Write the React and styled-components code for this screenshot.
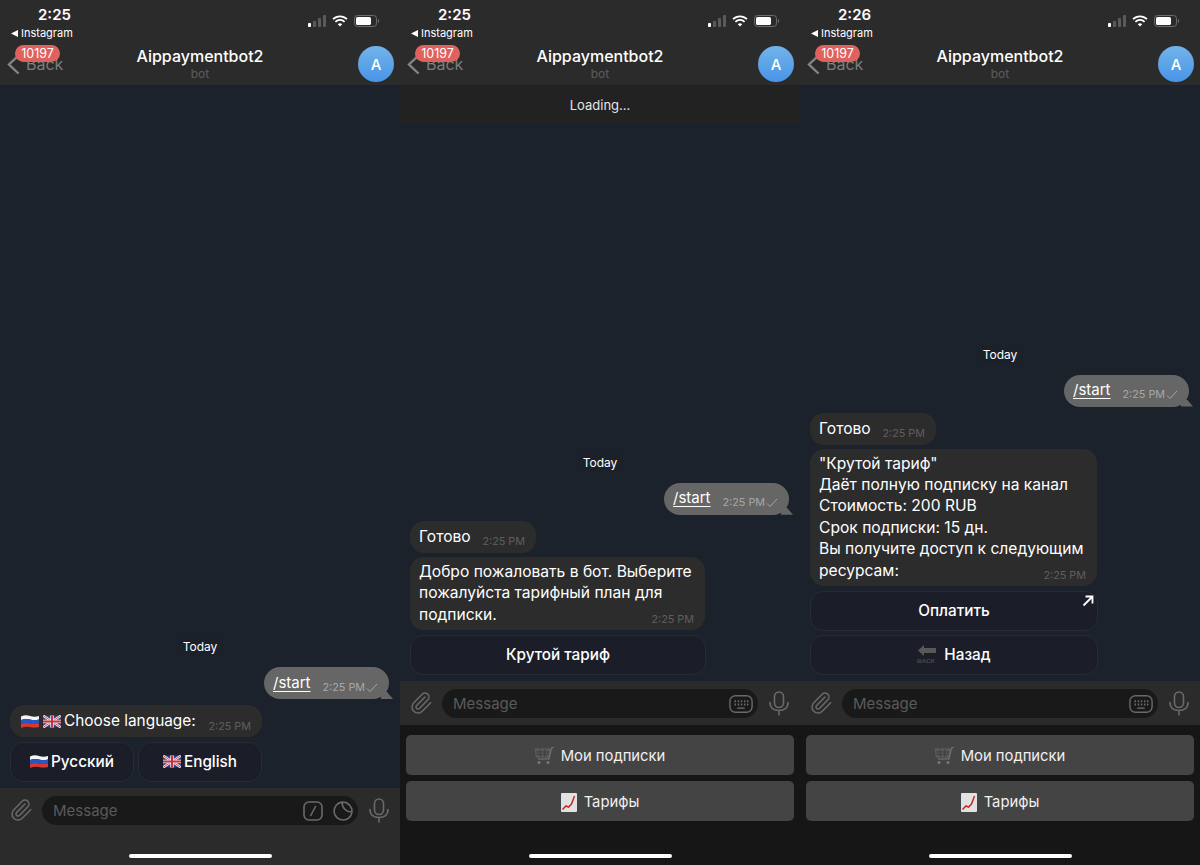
import React from 'react';
import styled, { createGlobalStyle, css } from 'styled-components';
import { Paperclip } from 'lucide-react';

const GlobalStyle = createGlobalStyle`
  html, body { margin: 0; padding: 0; background: #1b222c; }
  body { font-family: Inter, "Liberation Sans", sans-serif; }
`;

const Page = styled.div`
  display: flex;
  width: 1200px;
  height: 865px;
  overflow: hidden;
`;

const Phone = styled.section`
  width: 400px;
  height: 865px;
  display: flex;
  flex-direction: column;
  background: #1b222c;
  color: #fff;
  position: relative;
`;

const Header = styled.header`
  height: 85px;
  flex: none;
  background: #2b2b2b;
  position: relative;
`;

const Clock = styled.div`
  position: absolute;
  left: 38px;
  top: 6px;
  font-size: 15px;
  font-weight: 600;
  line-height: 18px;
`;

const BackApp = styled.div`
  position: absolute;
  left: 11px;
  top: 26px;
  font-size: 11px;
  line-height: 14px;
  display: flex;
  align-items: center;
  gap: 3px;
`;

const StatusIcons = styled.div`
  position: absolute;
  left: 308px;
  top: 15px;
  display: flex;
  align-items: center;
  gap: 6px;
`;

const BackLink = styled.div`
  position: absolute;
  left: 7px;
  top: 53px;
  display: flex;
  align-items: center;
  gap: 6px;
  color: #7d7d7d;
  font-size: 16px;
  line-height: 22px;
`;

const Badge = styled.div`
  position: absolute;
  left: 15px;
  top: 45px;
  height: 17px;
  width: 45px;
  border-radius: 9px;
  background: #e0615e;
  color: #fff;
  font-size: 12.5px;
  line-height: 17px;
  text-align: center;
`;

const Title = styled.div`
  position: absolute;
  left: 0;
  right: 0;
  top: 46px;
  text-align: center;
  font-size: 16px;
  font-weight: 500;
  line-height: 20px;
`;

const Subtitle = styled.div`
  position: absolute;
  left: 0;
  right: 0;
  top: 66px;
  text-align: center;
  font-size: 12px;
  line-height: 15px;
  color: #5c5c5c;
`;

const Avatar = styled.div`
  position: absolute;
  left: 358px;
  top: 46px;
  width: 36px;
  height: 36px;
  border-radius: 50%;
  background: linear-gradient(#72b4ea, #4a93e6);
  display: flex;
  align-items: center;
  justify-content: center;
  font-size: 15px;
  font-weight: 500;
`;

const Loading = styled.div`
  height: 39px;
  flex: none;
  background: #222;
  display: flex;
  align-items: center;
  justify-content: center;
  font-size: 13px;
  color: #e4e4e4;
`;

const Chat = styled.div`
  flex: 1;
  min-height: 0;
  display: flex;
  flex-direction: column;
  justify-content: flex-end;
  padding: 0 10px 6px;
`;

const DateChip = styled.div`
  align-self: center;
  background: #1c2129;
  border-radius: 10px;
  padding: 0 6px;
  height: 18px;
  line-height: 18px;
  font-size: 12px;
  margin-bottom: 11px;
`;

const Outgoing = styled.div`
  align-self: flex-end;
  position: relative;
  height: 32px;
  width: 125px;
  box-sizing: border-box;
  margin-right: 1px;
  margin-bottom: 6px;
  border-radius: 16px;
  background: #666;
  padding-left: 9px;
  display: flex;
  align-items: center;
  gap: 12px;
  font-size: 15px;

  &::after {
    content: '';
    position: absolute;
    right: -4px;
    bottom: 0;
    width: 12px;
    height: 7px;
    background: #666;
    clip-path: polygon(0 0, 50% 0, 100% 100%, 0 100%);
  }
`;

const Command = styled.span`
  text-decoration: underline;
  text-underline-offset: 3px;
  margin-bottom: 2px;
`;

const Time = styled.span`
  font-size: 10.8px;
  color: ${p => p.$light ? '#a6a6a6' : '#5f5f5f'};
  line-height: 12px;
  white-space: nowrap;
`;

const OutTime = styled.span`
  display: flex;
  align-items: center;
  gap: 1px;
  margin-top: 9px;
  position: relative;
  z-index: 1;
`;

const Incoming = styled.div`
  align-self: flex-start;
  box-sizing: border-box;
  width: ${p => p.$width}px;
  border-radius: 14px;
  background: #2c2c2c;
  font-size: 15.6px;
  line-height: 21.4px;
  position: relative;
  margin-bottom: ${p => p.$gap ?? 4}px;
  ${p => p.$single ? css`
    height: 32px;
    padding: 0 9px;
    display: flex;
    align-items: center;
  ` : css`
    padding: 4px 9px 5px;
  `}
`;

const TimeSlot = styled.span`
  position: absolute;
  right: 11px;
  bottom: ${p => p.$low ?? 2}px;
`;

const FlagRow = styled.span`
  display: flex;
  align-items: center;
  gap: 3.5px;
  margin-left: 2px;
  font-size: 15.4px;
`;

const KeyRow = styled.div`
  display: grid;
  grid-template-columns: ${p => p.$columns};
  gap: 4px;
  margin-bottom: ${p => p.$gap ?? 0}px;
`;

const InlineButton = styled.div`
  height: 40px;
  box-sizing: border-box;
  position: relative;
  border: 1px solid #262b34;
  border-radius: 13px;
  background: #1b1e28;
  display: flex;
  align-items: center;
  justify-content: center;
  gap: ${p => p.$gap ?? 3}px;
  padding-bottom: 2px;
  font-size: 15.3px;
  font-weight: 450;
`;

const Corner = styled.svg`
  position: absolute;
  top: 3px;
  right: 3px;
`;

const Composer = styled.div`
  height: ${p => p.$height}px;
  flex: none;
  box-sizing: border-box;
  background: #2b2b2b;
  padding: 8px 9px 0 9px;
  display: flex;
  align-items: flex-start;
  gap: 9px;
  color: #6a6a6a;
`;

const InputBox = styled.div`
  flex: 1;
  height: 29px;
  border-radius: 15px;
  background: #191919;
  display: flex;
  align-items: center;
  justify-content: space-between;
  padding: 0 5px 0 11px;
  font-size: 15px;
  color: #5a5a5a;
`;

const InputIcons = styled.div`
  display: flex;
  align-items: center;
  gap: 10px;
`;

const IconSlot = styled.span`
  display: flex;
  width: 24px;
  justify-content: center;
  flex: none;
  margin-top: 2px;
`;

const Keyboard = styled.div`
  height: 140px;
  flex: none;
  box-sizing: border-box;
  background: #161616;
  padding: 10px 6px 0;
  display: flex;
  flex-direction: column;
  gap: 6px;
`;

const ReplyKey = styled.div`
  height: 40px;
  box-sizing: border-box;
  padding-top: 2px;
  border-radius: 5px;
  background: #444;
  display: flex;
  align-items: center;
  justify-content: center;
  gap: 7px;
  font-size: 14.8px;
  color: #f1f1f1;
`;

const HomeBar = styled.div`
  position: absolute;
  left: 129px;
  bottom: 7px;
  width: 143px;
  height: 4px;
  border-radius: 2px;
  background: #fff;
`;

const RuFlag = () => (
  <svg width="18" height="13" viewBox="0 0 18 13">
    <path d="M0 1.5 Q4.5 -0.5 9 1 T18 1 V4.5 Q13.5 5.5 9 4.5 T0 5Z" fill="#f4f4f4" />
    <path d="M0 5 Q4.5 3.5 9 4.5 T18 4.5 V8.5 Q13.5 9.5 9 8.5 T0 9Z" fill="#2c55c4" />
    <path d="M0 9 Q4.5 7.5 9 8.5 T18 8.5 V12 Q13.5 13 9 12 T0 13Z" fill="#d8382e" />
  </svg>
);

const UkFlag = () => (
  <svg width="18" height="13" viewBox="0 0 18 13">
    <rect y="0.5" width="18" height="12" fill="#2b3f86" />
    <path d="M0 .5 18 12.5M18 .5 0 12.5" stroke="#eee" strokeWidth="2.4" />
    <path d="M0 .5 18 12.5M18 .5 0 12.5" stroke="#c8313c" strokeWidth="0.8" />
    <path d="M9 .5V12.5M0 6.5H18" stroke="#eee" strokeWidth="3.6" />
    <path d="M9 .5V12.5M0 6.5H18" stroke="#c8313c" strokeWidth="2" />
  </svg>
);

const Check = () => (
  <svg width="12" height="10" viewBox="0 0 12 10" fill="none" stroke="#a6a6a6" strokeWidth="1">
    <path d="M1 5.5 4 8.5 11 1" />
  </svg>
);

const Chevron = () => (
  <svg width="13" height="21" viewBox="0 0 13 21" fill="none" stroke="#858585" strokeWidth="2.4">
    <path d="M11.5 1.5 2 10.5l9.5 9" />
  </svg>
);

const StatusBarIcons = () => (
  <StatusIcons>
    <svg width="18" height="12" viewBox="0 0 18 12">
      <rect x="0" y="8" width="3" height="4" rx="0.7" fill="#fff" />
      <rect x="5" y="6" width="3" height="6" rx="0.7" fill="#5a5a5a" />
      <rect x="10" y="3" width="3" height="9" rx="0.7" fill="#5a5a5a" />
      <rect x="15" y="0" width="3" height="12" rx="0.7" fill="#5a5a5a" />
    </svg>
    <svg width="16" height="12" viewBox="0 0 16 12" fill="none" stroke="#fff" strokeWidth="1.8">
      <path d="M1 4.2a10 10 0 0 1 14 0" />
      <path d="M3.4 6.8a6.6 6.6 0 0 1 9.2 0" />
      <path d="M8 11.6 5.8 9.2a3.2 3.2 0 0 1 4.4 0Z" fill="#fff" stroke="none" />
    </svg>
    <svg width="26" height="12" viewBox="0 0 26 12">
      <rect x="0.5" y="0.5" width="22" height="11" rx="3" fill="none" stroke="#6d6d6d" />
      <rect x="2" y="2" width="15" height="8" rx="1.6" fill="#fff" />
      <path d="M24 4v4a2 2 0 0 0 1.2-2A2 2 0 0 0 24 4Z" fill="#6d6d6d" />
    </svg>
  </StatusIcons>
);

const TopBar = ({ clock }) => (
  <Header>
    <Clock>{clock}</Clock>
    <BackApp>
      <svg width="7" height="7" viewBox="0 0 7 7"><path d="M7 0v7L0 3.5Z" fill="#fff" /></svg>
      Instagram
    </BackApp>
    <StatusBarIcons />
    <BackLink><Chevron />Back</BackLink>
    <Badge>10197</Badge>
    <Title>Aippaymentbot2</Title>
    <Subtitle>bot</Subtitle>
    <Avatar>A</Avatar>
  </Header>
);

const StartMessage = () => (
  <Outgoing>
    <Command>/start</Command>
    <OutTime><Time $light>2:25 PM</Time><Check /></OutTime>
  </Outgoing>
);

const SlashIcon = () => (
  <svg width="20" height="20" viewBox="0 0 20 20" fill="none" stroke="#6a6a6a" strokeWidth="1.6">
    <rect x="1" y="1" width="18" height="18" rx="5" />
    <path d="M12.5 5.5 7.8 14.5" strokeLinecap="round" />
  </svg>
);

const StickerIcon = () => (
  <svg width="20" height="20" viewBox="0 0 20 20" fill="none" stroke="#6a6a6a" strokeWidth="1.6">
    <path d="M19 11A9 9 0 1 1 9 1.100L13 1.500Q17 3.500 18.800 8Z" />
    <path d="M9 1.100C9 7 13 11 19 11" />
  </svg>
);

const KeyboardIcon = () => (
  <svg width="24" height="20" viewBox="0 0 26 20" fill="none" stroke="#6a6a6a" strokeWidth="1.5">
    <rect x="1" y="1" width="24" height="18" rx="6" />
    <path d="M6 7h1.600M9.400 7H11M12.800 7h1.600M16.200 7h1.600M19.400 7H21M6 10.500h1.600M9.400 10.500H11M12.800 10.500h1.600M16.200 10.500h1.600M19.400 10.500H21" strokeWidth="2" />
    <path d="M9 14.500h8" />
  </svg>
);

const MicIcon = () => (
  <svg width="20" height="25" viewBox="0 0 20 25" fill="none" stroke="#6a6a6a" strokeWidth="1.6" strokeLinecap="round">
    <rect x="5.500" y="1" width="9" height="15.500" rx="4.500" />
    <path d="M1 11.500c0 5.500 4 8 9 8s9-2.500 9-8M10 19.500V24" />
  </svg>
);

const MessageBar = ({ height, children }) => (
  <Composer $height={height}>
    <IconSlot><Paperclip size={24} strokeWidth={1.5} /></IconSlot>
    <InputBox>
      Message
      <InputIcons>{children}</InputIcons>
    </InputBox>
    <IconSlot><MicIcon /></IconSlot>
  </Composer>
);

const CartIcon = () => (
  <svg width="19" height="18" viewBox="0 0 19 18" fill="none" stroke="#686868" strokeWidth="0.8">
    <path d="M15 2H0l1.500 8H14Z" fill="#555" />
    <path d="M5 2l.5 8M10 2l-.5 8M.5 5h14M1 7.500h13" stroke="#3e3e3e" />
    <path d="M19 .5 16.500 1 14 12H3" stroke="#777" strokeWidth="1.100" />
    <circle cx="4" cy="15.500" r="1.500" fill="#777" stroke="none" />
    <circle cx="13" cy="15.500" r="1.500" fill="#777" stroke="none" />
  </svg>
);

const ChartIcon = () => (
  <svg width="16" height="19" viewBox="0 0 16 19">
    <rect width="16" height="19" rx="1" fill="#e2e2e2" />
    <path d="M1.500 16.500 5 13l2.500 1 3-3 3-8" fill="none" stroke="#c22a2a" strokeWidth="1.500" />
  </svg>
);

const BackIcon = () => (
  <svg width="19" height="18" viewBox="0 0 19 18">
    <path d="M1 5.500 7 0v3h12v5H7v3Z" fill="#585858" />
    <text x="0" y="17.500" fontSize="6" fontWeight="700" fill="#4a4a4a" textLength="18" lengthAdjust="spacingAndGlyphs" fontFamily="Liberation Sans, sans-serif">BACK</text>
  </svg>
);

const ArrowCorner = () => (
  <Corner width="12" height="12" viewBox="0 0 12 12" fill="none" stroke="#fff" strokeWidth="1.800">
    <path d="M1.500 10.500 10 2M3.500 1.500h7v7" />
  </Corner>
);

const ReplyKeyboard = () => (
  <Keyboard>
    <ReplyKey><CartIcon />Мои подписки</ReplyKey>
    <ReplyKey><ChartIcon />Тарифы</ReplyKey>
  </Keyboard>
);

export default function App() {
  return (
    <Page>
      <GlobalStyle />
      <Phone>
        <TopBar clock="2:25" />
        <Chat>
          <DateChip>Today</DateChip>
          <StartMessage />
          <Incoming $single $width={252} $gap={5}>
            <FlagRow><RuFlag /><UkFlag />Choose language:</FlagRow>
            <TimeSlot><Time>2:25 PM</Time></TimeSlot>
          </Incoming>
          <KeyRow $columns="124px 124px">
            <InlineButton><RuFlag />Русский</InlineButton>
            <InlineButton><UkFlag />English</InlineButton>
          </KeyRow>
        </Chat>
        <MessageBar height={77}>
          <SlashIcon />
          <StickerIcon />
        </MessageBar>
        <HomeBar />
      </Phone>

      <Phone>
        <TopBar clock="2:25" />
        <Loading>Loading...</Loading>
        <Chat>
          <DateChip>Today</DateChip>
          <StartMessage />
          <Incoming $single $width={126}>
            Готово
            <TimeSlot><Time>2:25 PM</Time></TimeSlot>
          </Incoming>
          <Incoming $width={295} $gap={5}>
            Добро пожаловать в бот. Выберите пожалуйста тарифный план для подписки.
            <TimeSlot><Time>2:25 PM</Time></TimeSlot>
          </Incoming>
          <KeyRow $columns="296px">
            <InlineButton>Крутой тариф</InlineButton>
          </KeyRow>
        </Chat>
        <MessageBar height={44}>
          <KeyboardIcon />
        </MessageBar>
        <ReplyKeyboard />
        <HomeBar />
      </Phone>

      <Phone>
        <TopBar clock="2:26" />
        <Chat>
          <DateChip>Today</DateChip>
          <StartMessage />
          <Incoming $single $width={126}>
            Готово
            <TimeSlot><Time>2:25 PM</Time></TimeSlot>
          </Incoming>
          <Incoming $width={287} $gap={5}>
            "Крутой тариф"<br />
            Даёт полную подписку на канал<br />
            Стоимость: 200 RUB<br />
            Срок подписки: 15 дн.<br />
            Вы получите доступ к следующим ресурсам:
            <TimeSlot><Time>2:25 PM</Time></TimeSlot>
          </Incoming>
          <KeyRow $columns="288px" $gap={4}>
            <InlineButton>Оплатить<ArrowCorner /></InlineButton>
          </KeyRow>
          <KeyRow $columns="288px">
            <InlineButton $gap={8}><BackIcon />Назад</InlineButton>
          </KeyRow>
        </Chat>
        <MessageBar height={44}>
          <KeyboardIcon />
        </MessageBar>
        <ReplyKeyboard />
        <HomeBar />
      </Phone>
    </Page>
  );
}
